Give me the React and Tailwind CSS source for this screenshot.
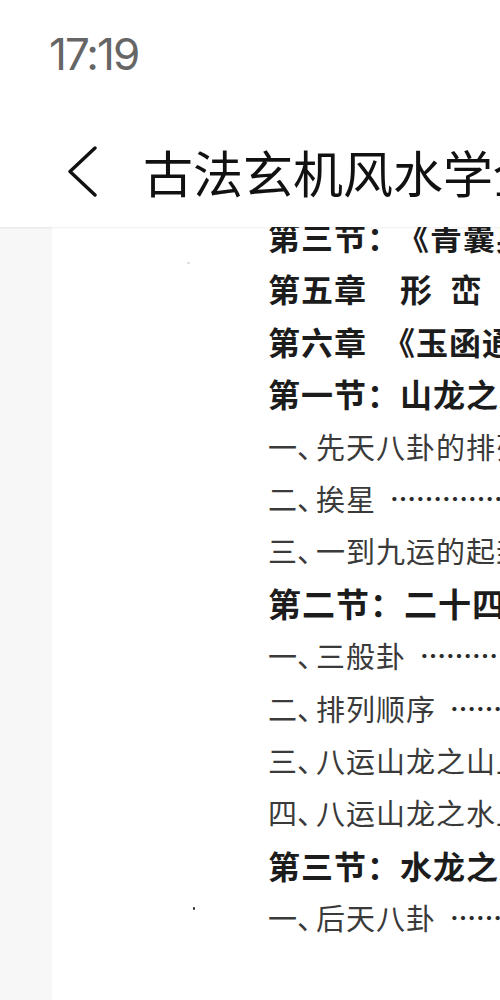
import React from 'react'

const CJK = { fontFamily: '"Noto Sans CJK SC", "Noto Sans", sans-serif' }

// 目录行：h = 章节标题（粗体），r = 普通条目
const rows = [
  { type: 'h', node: (<>第三节：<span className="ml-[13px]">《青囊奥语》</span></>) },
  { type: 'h', node: (<>第五章　<span className="tracking-[18px]">形峦</span>法</>) },
  { type: 'h', node: (<>第六章<span className="ml-[16px]">《玉函通秘》</span></>) },
  { type: 'h', node: '第一节：山龙之九运' },
  { type: 'r', num: '一', text: '先天八卦的排列' },
  { type: 'r', num: '二', text: '挨星', dots: true },
  { type: 'r', num: '三', text: '一到九运的起卦' },
  { type: 'h', node: '第二节：二十四山', big: true },
  { type: 'r', num: '一', text: '三般卦', dots: true },
  { type: 'r', num: '二', text: '排列顺序', dots: true },
  { type: 'r', num: '三', text: '八运山龙之山上' },
  { type: 'r', num: '四', text: '八运山龙之水上' },
  { type: 'h', node: '第三节：水龙之九运' },
  { type: 'r', num: '一', text: '后天八卦', dots: true },
]

function TocRow({ row }) {
  if (row.type === 'h') {
    return (
      <div
        className={`h-[52.4px] leading-[52.4px] whitespace-nowrap font-bold text-[#1c1c1c] ${
          row.big ? 'text-[33px] tracking-[1px]' : 'text-[32px] tracking-[1px]'
        }`}
      >
        {row.node}
      </div>
    )
  }
  return (
    <div className="h-[52.4px] leading-[52.4px] whitespace-nowrap text-[29px] text-[#3a3a3a] flex items-center">
      <span>{row.num}</span>
      <span className="tracking-[-10px]">、</span>
      <span className="tracking-[1px]">{row.text}</span>
      {row.dots && (
        <span className="ml-[14px] text-[26px] font-bold text-[#2a2a2a]">……………………</span>
      )}
    </div>
  )
}

export default function App() {
  return (
    <div className="w-[500px] h-[1000px] overflow-hidden bg-white flex flex-col" style={CJK}>
      {/* 顶部：状态栏 + 标题栏 */}
      <header className="h-[227px] shrink-0 bg-white relative z-10 shadow-[0_1px_2px_rgba(0,0,0,0.07)]">
        <div
          className="pl-[49px] pt-[32px] text-[44px] leading-[44px] tracking-[-2px] text-[#666]"
          style={{ fontFamily: 'Inter, Roboto, sans-serif' }}
        >
          17:19
        </div>
        <div className="mt-[65px] h-[60px] flex items-center overflow-hidden">
          <svg className="ml-[66px] shrink-0" width="32" height="52" viewBox="0 0 32 52" fill="none">
            <path d="M29 3 L4 26.5 L29 50" stroke="#111" strokeWidth="3.4" strokeLinecap="round" strokeLinejoin="round" />
          </svg>
          <div className="ml-[45px] text-[50px] leading-[60px] text-[#111] whitespace-nowrap">
            古法玄机风水学全集
          </div>
        </div>
      </header>

      {/* 文档页面 */}
      <div className="flex flex-1 min-h-0">
        <div className="w-[52px] shrink-0 bg-[#f7f7f8]" />
        <div className="flex-1 relative overflow-hidden bg-white pl-[216px]">
          <div className="-mt-[17px]">
            {rows.map((row, i) => (
              <TocRow key={i} row={row} />
            ))}
          </div>
          <span className="absolute left-[141px] top-[680px] w-[2px] h-[3px] bg-[#333] rounded-full" />
          <span className="absolute left-[135px] top-[35px] w-[3px] h-[2px] bg-[#ddd] rounded-full" />
        </div>
      </div>
    </div>
  )
}
